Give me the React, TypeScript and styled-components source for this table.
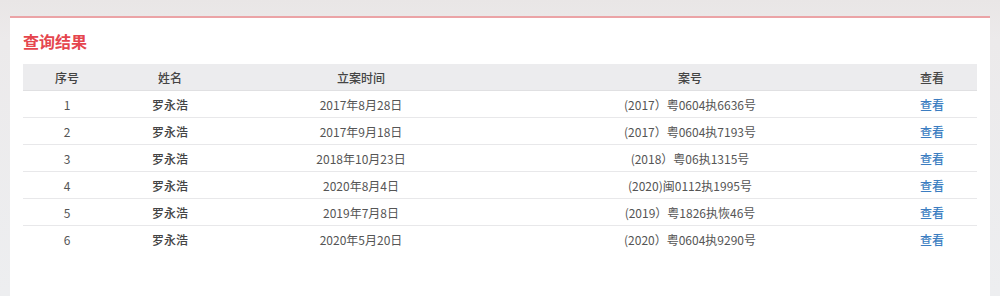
import styled, { createGlobalStyle } from "styled-components";

const Global = createGlobalStyle`
    html, body {
        margin: 0;
        padding: 0;
        background: #ebe9e9;
        font-family: "Noto Sans CJK SC", "Noto Sans", sans-serif;
    }
`;

const Page = styled.div`
    height: 296px;
    padding: 16px 10px 0;
    box-sizing: border-box;
    background: linear-gradient(#e9e6e6, #eceaeb 40px, #edeef0);
`;

const Panel = styled.section`
    height: 100%;
    background: #fff;
    border-top: 2px solid #eba3a6;
    padding: 12px 13px 0;
    box-sizing: border-box;
`;

const Title = styled.h2`
    margin: 0;
    font-size: 16px;
    line-height: 22px;
    font-weight: bold;
    color: #e5464e;
`;

const Table = styled.table`
    margin-top: 12px;
    width: 954px;
    border-collapse: collapse;
    table-layout: fixed;
    font-size: 12px;
    color: #555;
`;

const Th = styled.th<{ $w: number }>`
    width: ${(p) => p.$w}px;
    height: 26px;
    padding: 0;
    background: #ececee;
    border-bottom: 1px solid #e0e0e2;
    font-weight: 500;
    color: #444;
    text-align: center;
`;

const Tr = styled.tr`
    &:not(:last-child) td {
        border-bottom: 1px solid #e8e8ea;
    }
`;

const Td = styled.td<{ $bold?: boolean }>`
    height: 26px;
    padding: 0;
    text-align: center;
    font-weight: ${(p) => (p.$bold ? 500 : 400)};
    color: ${(p) => (p.$bold ? "#444" : "#555")};
`;

const Look = styled.a`
    color: #3b7dc1;
    font-weight: 500;
    text-decoration: none;
    cursor: pointer;
`;

const rows = [
    ["1", "罗永浩", "2017年8月28日", "(2017）粤0604执6636号"],
    ["2", "罗永浩", "2017年9月18日", "(2017）粤0604执7193号"],
    ["3", "罗永浩", "2018年10月23日", "(2018）粤06执1315号"],
    ["4", "罗永浩", "2020年8月4日", "(2020)闽0112执1995号"],
    ["5", "罗永浩", "2019年7月8日", "(2019）粤1826执恢46号"],
    ["6", "罗永浩", "2020年5月20日", "(2020）粤0604执9290号"],
];

export default function App() {
    return (
        <Page>
            <Global />
            <Panel>
                <Title>查询结果</Title>
                <Table>
                    <thead>
                        <tr>
                            <Th $w={88}>序号</Th>
                            <Th $w={118}>姓名</Th>
                            <Th $w={264}>立案时间</Th>
                            <Th $w={394}>案号</Th>
                            <Th $w={90}>查看</Th>
                        </tr>
                    </thead>
                    <tbody>
                        {rows.map((r) => (
                            <Tr key={r[0]}>
                                <Td>{r[0]}</Td>
                                <Td $bold>{r[1]}</Td>
                                <Td>{r[2]}</Td>
                                <Td>{r[3]}</Td>
                                <Td>
                                    <Look>查看</Look>
                                </Td>
                            </Tr>
                        ))}
                    </tbody>
                </Table>
            </Panel>
        </Page>
    );
}
